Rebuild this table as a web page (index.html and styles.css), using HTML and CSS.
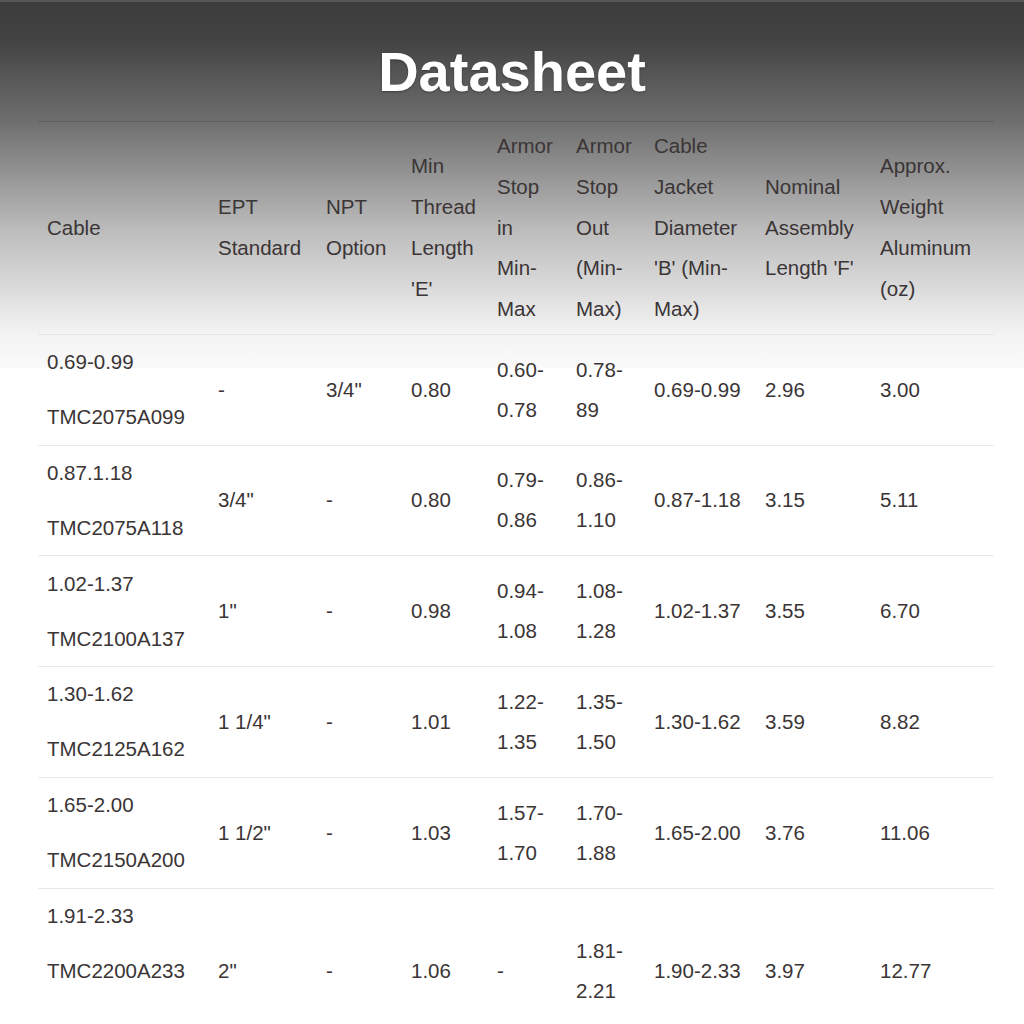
FILE: index.html
```html
<!DOCTYPE html>
<html lang="en">
<head>
<meta charset="utf-8">
<title>Datasheet</title>
<link rel="stylesheet" href="styles.css">
</head>
<body>
<main class="page">
  <h1 class="title">Datasheet</h1>
  <table class="sheet">
    <thead>
      <tr>
        <th>Cable</th>
        <th>EPT<br>Standard</th>
        <th>NPT<br>Option</th>
        <th>Min<br>Thread<br>Length<br>'E'</th>
        <th>Armor<br>Stop<br>in<br>Min-<br>Max</th>
        <th>Armor<br>Stop<br>Out<br>(Min-<br>Max)</th>
        <th>Cable<br>Jacket<br>Diameter<br>'B' (Min-<br>Max)</th>
        <th>Nominal<br>Assembly<br>Length 'F'</th>
        <th>Approx.<br>Weight<br>Aluminum<br>(oz)</th>
      </tr>
    </thead>
    <tbody>
      <tr>
        <td class="cable"><p>0.69-0.99</p><p>TMC2075A099</p></td>
        <td>-</td><td>3/4"</td><td>0.80</td>
        <td>0.60-<br>0.78</td><td>0.78-<br>89</td>
        <td>0.69-0.99</td><td>2.96</td><td>3.00</td>
      </tr>
      <tr>
        <td class="cable"><p>0.87.1.18</p><p>TMC2075A118</p></td>
        <td>3/4"</td><td>-</td><td>0.80</td>
        <td>0.79-<br>0.86</td><td>0.86-<br>1.10</td>
        <td>0.87-1.18</td><td>3.15</td><td>5.11</td>
      </tr>
      <tr>
        <td class="cable"><p>1.02-1.37</p><p>TMC2100A137</p></td>
        <td>1"</td><td>-</td><td>0.98</td>
        <td>0.94-<br>1.08</td><td>1.08-<br>1.28</td>
        <td>1.02-1.37</td><td>3.55</td><td>6.70</td>
      </tr>
      <tr>
        <td class="cable"><p>1.30-1.62</p><p>TMC2125A162</p></td>
        <td>1 1/4"</td><td>-</td><td>1.01</td>
        <td>1.22-<br>1.35</td><td>1.35-<br>1.50</td>
        <td>1.30-1.62</td><td>3.59</td><td>8.82</td>
      </tr>
      <tr>
        <td class="cable"><p>1.65-2.00</p><p>TMC2150A200</p></td>
        <td>1 1/2"</td><td>-</td><td>1.03</td>
        <td>1.57-<br>1.70</td><td>1.70-<br>1.88</td>
        <td>1.65-2.00</td><td>3.76</td><td>11.06</td>
      </tr>
      <tr>
        <td class="cable"><p>1.91-2.33</p><p>TMC2200A233</p><p>&nbsp;</p></td>
        <td>2"</td><td>-</td><td>1.06</td>
        <td>-</td><td>1.81-<br>2.21</td>
        <td>1.90-2.33</td><td>3.97</td><td>12.77</td>
      </tr>
    </tbody>
  </table>
</main>
</body>
</html>
```
FILE: styles.css
```css
html, body {
  margin: 0;
  padding: 0;
}
body {
  background-color: #ffffff;
  background-image: linear-gradient(to bottom,
    #575757 0px, #575757 2px,
    #3d3d3d 2px, #434343 40px,
    #6e6e6e 121px, #bcbcbc 230px,
    #f3f3f3 334px, #fafafa 368px,
    #ffffff 368px);
  background-repeat: no-repeat;
  background-size: 100% 368px;
  font-family: "Liberation Sans", Arial, Helvetica, sans-serif;
  color: #3b3536;
}
.page {
  padding: 44px 30px 0 38px;
}
.title {
  margin: 0 -30px 21px -38px;
  font-size: 56px;
  line-height: 56px;
  font-weight: 700;
  color: #ffffff;
  text-align: center;
  text-shadow: 0 1px 2px rgba(0, 0, 0, 0.35);
}
.sheet {
  border-collapse: collapse;
  table-layout: fixed;
  width: 956px;
  font-size: 20.5px;
}
.sheet th,
.sheet td {
  text-align: left;
  vertical-align: middle;
  white-space: nowrap;
  padding-left: 9px;
  padding-right: 0;
}
.sheet thead tr {
  border-top: 1px solid rgba(0, 0, 0, 0.14);
  border-bottom: 1px solid #e8e4e2;
}
.sheet th {
  font-weight: 400;
  line-height: 40.75px;
  padding-top: 4px;
  padding-bottom: 4px;
}
.sheet tbody tr {
  border-bottom: 1px solid #ece8e6;
}
.sheet tbody tr:last-child {
  border-bottom: none;
}
.sheet td {
  line-height: 40px;
  padding-top: 7.4px;
  padding-bottom: 7.4px;
}
.sheet td.cable p {
  margin: 0 0 15px 0;
}
.sheet td.cable p:last-child {
  margin-bottom: 0;
}
.sheet th:nth-child(1) { width: 162px; }
.sheet th:nth-child(2) { width: 99px; }
.sheet th:nth-child(3) { width: 76px; }
.sheet th:nth-child(4) { width: 77px; }
.sheet th:nth-child(5) { width: 70px; }
.sheet th:nth-child(6) { width: 69px; }
.sheet th:nth-child(7) { width: 102px; }
.sheet th:nth-child(8) { width: 106px; }
.sheet th:nth-child(9) { width: 114px; }
```
